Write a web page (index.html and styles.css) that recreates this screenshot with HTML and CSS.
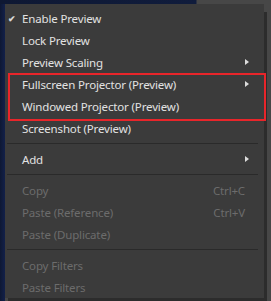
FILE: index.html
```html
<!DOCTYPE html>
<html lang="en">
<head>
    <meta charset="UTF-8">
    <title>Preview context menu</title>
    <link rel="stylesheet" href="styles.css">
</head>
<body>
    <div class="menu">
        <div class="item"><span class="check">&#10004;</span><span class="label">Enable Preview</span></div>
        <div class="item"><span class="check"></span><span class="label">Lock Preview</span></div>
        <div class="item"><span class="check"></span><span class="label">Preview Scaling</span><span class="arrow"></span></div>
        <div class="highlight">
            <div class="item"><span class="check"></span><span class="label">Fullscreen Projector (Preview)</span><span class="arrow"></span></div>
            <div class="item"><span class="check"></span><span class="label">Windowed Projector (Preview)</span></div>
        </div>
        <div class="item"><span class="check"></span><span class="label">Screenshot (Preview)</span></div>
        <div class="sep"></div>
        <div class="item"><span class="check"></span><span class="label">Add</span><span class="arrow"></span></div>
        <div class="sep"></div>
        <div class="item disabled"><span class="check"></span><span class="label">Copy</span><span class="key">Ctrl+C</span></div>
        <div class="item disabled"><span class="check"></span><span class="label">Paste (Reference)</span><span class="key">Ctrl+V</span></div>
        <div class="item disabled"><span class="check"></span><span class="label">Paste (Duplicate)</span></div>
        <div class="sep"></div>
        <div class="item disabled"><span class="check"></span><span class="label">Copy Filters</span></div>
        <div class="item disabled"><span class="check"></span><span class="label">Paste Filters</span></div>
    </div>
</body>
</html>
```

FILE: styles.css
```css
:root {
    --menu-bg: #3b3b3b;
    --text-color: #e2e2e2;
    --disabled-color: #6c6c6c;
    --sep-color: #2a2a2a;
    --mark-color: #e8252a;
}
html, body {
    height: 100%;
}
body {
    margin: 0;
    overflow: hidden;
    font-family: 'Noto Sans', 'Open Sans', sans-serif;
    font-size: 11.5px;
    letter-spacing: -0.15px;
    color: var(--text-color);
    background:
        linear-gradient(to right, #0e1833 0, #101c3c 196px, #474747 197px) top left / 100% 4px no-repeat,
        linear-gradient(to right, #0e1833 0, #12204a 5px, #474747 5px);
}
.menu {
    margin: 4px 0 0 5px;
    width: 259px;
    padding-top: 3px;
    background-color: var(--menu-bg);
    box-shadow: 3px 8px 0 #2c2c2c;
}
.item {
    display: flex;
    align-items: center;
    height: 22px;
    padding: 0 13px 0 3px;
    white-space: nowrap;
}
.check {
    width: 14px;
    flex: none;
    font-size: 9px;
    font-weight: bold;
    color: #d8d8d8;
}
.label {
    flex: 1;
}
.key {
    margin-right: 6px;
}
.arrow {
    width: 6px;
    height: 7px;
    flex: none;
}
.arrow::before {
    content: '';
    display: block;
    width: 0;
    height: 0;
    border-top: 3.5px solid transparent;
    border-bottom: 3.5px solid transparent;
    border-left: 4px solid #dcdcdc;
}
.disabled {
    color: var(--disabled-color);
}
.sep {
    height: 9px;
    margin: 0 6px 0 2px;
    display: flex;
    align-items: center;
}
.sep::before {
    content: '';
    flex: 1;
    height: 1px;
    background-color: var(--sep-color);
}
.highlight {
    position: relative;
}
.highlight::after {
    content: '';
    position: absolute;
    top: 0;
    bottom: -4px;
    left: 3px;
    right: -2px;
    border: 2px solid var(--mark-color);
}
```
